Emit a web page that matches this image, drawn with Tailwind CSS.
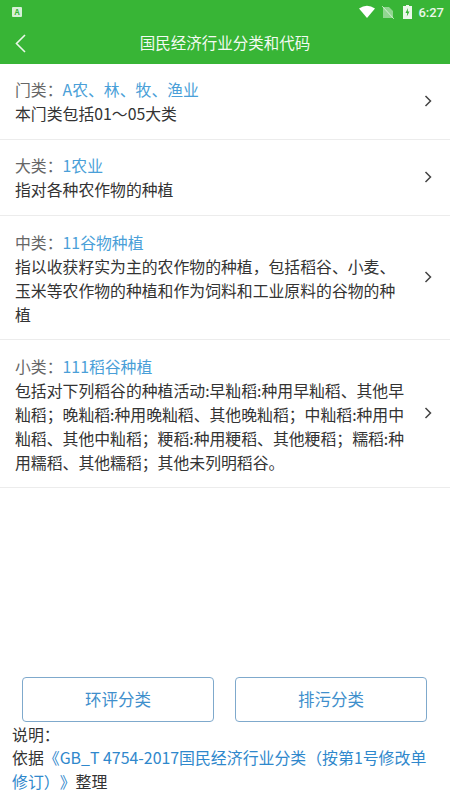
<!DOCTYPE html>
<html lang="zh">
<head>
  <meta charset="UTF-8" />
  <meta name="viewport" content="width=device-width, initial-scale=1.0" />
  <title>国民经济行业分类和代码</title>
  <script src="https://cdn.jsdelivr.net/npm/@tailwindcss/browser@4"></script>
</head>
<body class="bg-white text-[#333] font-['Noto_Sans_CJK_SC',sans-serif]">
  <div class="w-[450px] h-[800px] flex flex-col overflow-hidden">
    <!-- Status bar + title -->
    <header class="bg-[#38b536] h-[64px] text-white shrink-0">
      <div class="h-[24px] flex items-center justify-between pl-[12px] pr-[6px]">
        <div class="w-[10px] h-[10px] bg-white/80 rounded-[1px] flex items-center justify-center text-[8px] leading-none font-bold text-[#38b536]">A</div>
        <div class="flex items-center">
          <svg class="w-[16px] h-[14px] mr-[7px]" viewBox="0 0 16 14"><path d="M0 3.5 Q8 -2 16 3.5 L8 13 Z" fill="#fff"/></svg>
          <svg class="w-[12px] h-[13px] mr-[9px]" viewBox="0 0 12 13"><path d="M1 1 H7 L11 5 V12 H1 Z" fill="#fff" fill-opacity=".45"/><path d="M0 0 L12 13" stroke="#fff" stroke-opacity=".6" stroke-width="1"/></svg>
          <svg class="w-[9px] h-[14px] mr-[6px]" viewBox="0 0 9 14"><path d="M3 0 H6 V1 H9 V14 H0 V1 H3 Z" fill="#fff" fill-opacity=".9"/><path d="M5 3 L2.5 8 H4.2 L3.8 11.5 L6.5 6.5 H4.8 Z" fill="#38b536"/></svg>
          <span class="text-[13px] leading-none font-medium text-white/90 font-['Roboto',sans-serif]">6:27</span>
        </div>
      </div>
      <div class="h-[40px] relative flex items-center justify-center">
        <svg class="absolute left-[14px] top-[10px] w-[12px] h-[19px]" viewBox="0 0 12 19" fill="none"><path d="M11 1 L2.5 9.5 L11 18" stroke="#fff" stroke-opacity=".9" stroke-width="1.6"/></svg>
        <span class="text-[15.5px] leading-[20px] text-white/95 -mt-[4px]">国民经济行业分类和代码</span>
      </div>
    </header>

    <!-- Classification rows -->
    <main class="flex-1">
      <div class="flex items-center border-b border-[#ececec] h-[76px] pl-[15px] pr-[18px]">
        <div class="flex-1 text-[15.85px] leading-[24px] mt-[1px]">
          <p><span class="text-[#666]">门类：</span><span class="text-[#4a9fd8]">A农、林、牧、渔业</span></p>
          <p>本门类包括01～05大类</p>
        </div>
        <svg class="w-[8px] h-[12px] shrink-0 -mt-[2px]" viewBox="0 0 8 12" fill="none"><path d="M1.5 1 L6.5 6 L1.5 11" stroke="#444" stroke-width="1.5"/></svg>
      </div>
      <div class="flex items-center border-b border-[#ececec] h-[76px] pl-[15px] pr-[18px]">
        <div class="flex-1 text-[15.85px] leading-[24px] mt-[1px]">
          <p><span class="text-[#666]">大类：</span><span class="text-[#4a9fd8]">1农业</span></p>
          <p>指对各种农作物的种植</p>
        </div>
        <svg class="w-[8px] h-[12px] shrink-0 -mt-[2px]" viewBox="0 0 8 12" fill="none"><path d="M1.5 1 L6.5 6 L1.5 11" stroke="#444" stroke-width="1.5"/></svg>
      </div>
      <div class="flex items-center border-b border-[#ececec] h-[124px] pl-[15px] pr-[18px]">
        <div class="w-[392px] mr-[17px] text-[15.85px] leading-[24px] mt-[2px]">
          <p><span class="text-[#666]">中类：</span><span class="text-[#4a9fd8]">11谷物种植</span></p>
          <p>指以收获籽实为主的农作物的种植，包括稻谷、小麦、玉米等农作物的种植和作为饲料和工业原料的谷物的种植</p>
        </div>
        <svg class="w-[8px] h-[12px] shrink-0 -mt-[2px]" viewBox="0 0 8 12" fill="none"><path d="M1.5 1 L6.5 6 L1.5 11" stroke="#444" stroke-width="1.5"/></svg>
      </div>
      <div class="flex items-center border-b border-[#ececec] h-[148px] pl-[15px] pr-[18px]">
        <div class="w-[392px] mr-[17px] text-[15.85px] leading-[24px] mt-[2px]">
          <p><span class="text-[#666]">小类：</span><span class="text-[#4a9fd8]">111稻谷种植</span></p>
          <p>包括对下列稻谷的种植活动:早籼稻:种用早籼稻、其他早籼稻；晚籼稻:种用晚籼稻、其他晚籼稻；中籼稻:种用中籼稻、其他中籼稻；粳稻:种用粳稻、其他粳稻；糯稻:种用糯稻、其他糯稻；其他未列明稻谷。</p>
        </div>
        <svg class="w-[8px] h-[12px] shrink-0 -mt-[2px]" viewBox="0 0 8 12" fill="none"><path d="M1.5 1 L6.5 6 L1.5 11" stroke="#444" stroke-width="1.5"/></svg>
      </div>
    </main>

    <!-- Bottom buttons + note -->
    <footer class="shrink-0 pb-[7px]">
      <div class="flex justify-between pl-[22px] pr-[23px]">
        <button class="w-[192px] h-[45px] border border-[#7fa9cc] rounded-[4px] text-[16.5px] text-[#3f8fcc]">环评分类</button>
        <button class="w-[192px] h-[45px] border border-[#7fa9cc] rounded-[4px] text-[16.5px] text-[#3f8fcc]">排污分类</button>
      </div>
      <div class="pl-[12px] pr-[20px] text-[15.9px] leading-[23.5px] mt-[1px] [text-spacing-trim:space-all]">
        <p>说明：</p>
        <p>依据<span class="text-[#2f88cc]">《GB_T 4754-2017国民经济行业分类（按第1号修改单修订）》</span>整理</p>
      </div>
    </footer>
  </div>
</body>
</html>
